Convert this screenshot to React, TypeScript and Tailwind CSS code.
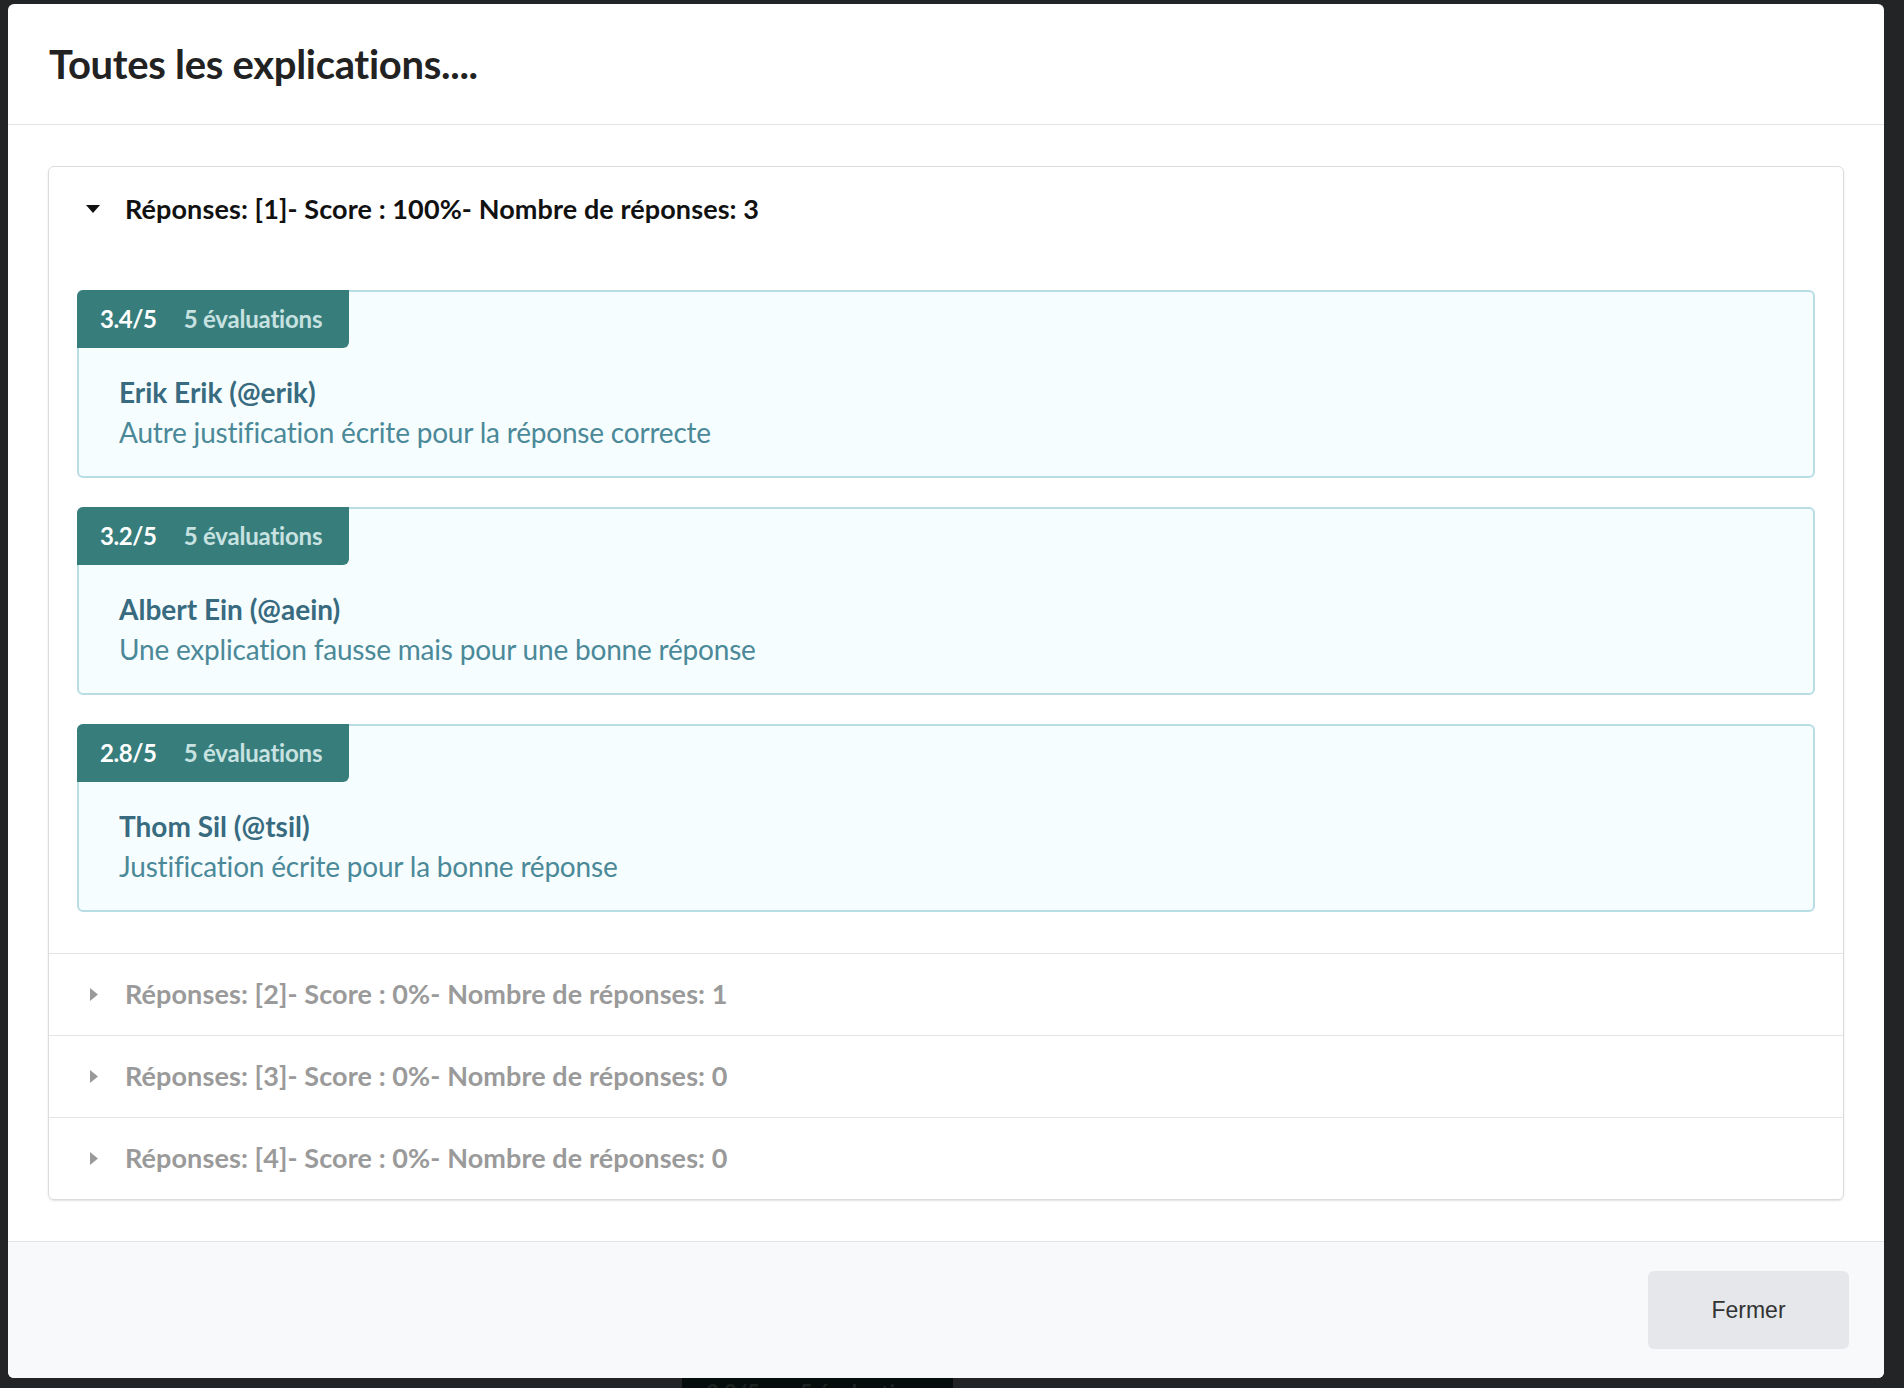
import React from "react";

const items = [
  { score: "3.4/5", evals: "5 évaluations", name: "Erik Erik (@erik)", text: "Autre justification écrite pour la réponse correcte" },
  { score: "3.2/5", evals: "5 évaluations", name: "Albert Ein (@aein)", text: "Une explication fausse mais pour une bonne réponse" },
  { score: "2.8/5", evals: "5 évaluations", name: "Thom Sil (@tsil)", text: "Justification écrite pour la bonne réponse" },
];

const collapsed = [
  "Réponses: [2]- Score : 0%- Nombre de réponses: 1",
  "Réponses: [3]- Score : 0%- Nombre de réponses: 0",
  "Réponses: [4]- Score : 0%- Nombre de réponses: 0",
];

function CaretDown() {
  return (
    <svg width="16" height="10" viewBox="0 0 16 10" className="shrink-0">
      <path d="M1 1 L15 1 L8 9 Z" fill="#111" />
    </svg>
  );
}

function CaretRight() {
  return (
    <svg width="10" height="15" viewBox="0 0 10 15" className="shrink-0">
      <path d="M1 1 L9 7.5 L1 14 Z" fill="#9a9a9a" />
    </svg>
  );
}

export default function App() {
  return (
    <div
      className="relative w-full h-[1388px] bg-[#232425] overflow-hidden"
      style={{ fontFamily: "Lato, 'Noto Sans', sans-serif" }}
    >
      <div className="absolute left-[682px] top-[1370px] w-[271px] h-[40px] bg-[#050d0d] flex items-start gap-[40px] pl-[24px] pt-[6px] text-[22px] font-bold text-[#1b2222]">
        <span>3.2/5</span>
        <span>5 évaluations</span>
      </div>
      <div className="relative pt-[4px] pl-[8px] pr-[20px]">
        <div className="bg-white rounded-[6px] flex flex-col overflow-hidden">
          <div className="h-[121px] flex items-center pl-[41px] border-b border-[#e4e4e4]">
            <h1 className="text-[40px] font-bold text-[#222] tracking-[-0.3px]">Toutes les explications....</h1>
          </div>
          <div className="px-[40px] py-[41px]">
            <div className="border border-[#dcdcdc] rounded-[6px] shadow-[0_1px_2px_rgba(0,0,0,0.12)]">
              <div className="px-[28px] pt-[28px] pb-[41px]">
                <div className="flex items-center h-[28px]">
                  <div className="w-[48px] pl-[8px] flex items-center">
                    <CaretDown />
                  </div>
                  <span className="text-[27px] font-bold text-[#111] leading-[28px] tracking-[0.1px]">
                    Réponses: [1]- Score : 100%- Nombre de réponses: 3
                  </span>
                </div>
                <div className="mt-[67px] flex flex-col gap-[29px]">
                  {items.map((it) => (
                    <div
                      key={it.name}
                      className="border-2 border-[#b9dde5] rounded-[6px] bg-[#f6fdfe] h-[188px] flex flex-col"
                    >
                      <div className="-mt-[2px] -ml-[2px] w-[272px] h-[58px] bg-[#377d7c] rounded-tl-[6px] rounded-br-[6px] flex items-center pl-[23px] text-[24px] font-bold">
                        <span className="text-white tracking-[-0.4px]">{it.score}</span>
                        <span className="ml-[27px] text-[#c7e2e0] tracking-[-0.2px]">{it.evals}</span>
                      </div>
                      <div className="pl-[40px] pt-[26px]">
                        <div className="text-[28px] font-bold text-[#386b80] leading-[36px]">{it.name}</div>
                        <div className="mt-[4px] text-[28px] text-[#4b8999] leading-[36px] tracking-[-0.2px]">{it.text}</div>
                      </div>
                    </div>
                  ))}
                </div>
              </div>
              {collapsed.map((c) => (
                <div key={c} className="h-[82px] border-t border-[#e4e4e4] flex items-center pl-[28px]">
                  <div className="w-[48px] pl-[12px] flex items-center">
                    <CaretRight />
                  </div>
                  <span className="text-[27px] font-bold text-[#9a9a9a] tracking-[0.1px]">{c}</span>
                </div>
              ))}
            </div>
          </div>
          <div className="h-[137px] bg-[#f8f9fa] border-t border-[#e4e4e4] flex items-center justify-end pr-[35px]">
            <button
              className="w-[201px] h-[78px] rounded-[6px] bg-[#e5e7ea] text-[23px] text-[#333]"
              style={{ fontFamily: "'Liberation Sans', Arial, sans-serif" }}
            >
              Fermer
            </button>
          </div>
        </div>
      </div>
    </div>
  );
}
